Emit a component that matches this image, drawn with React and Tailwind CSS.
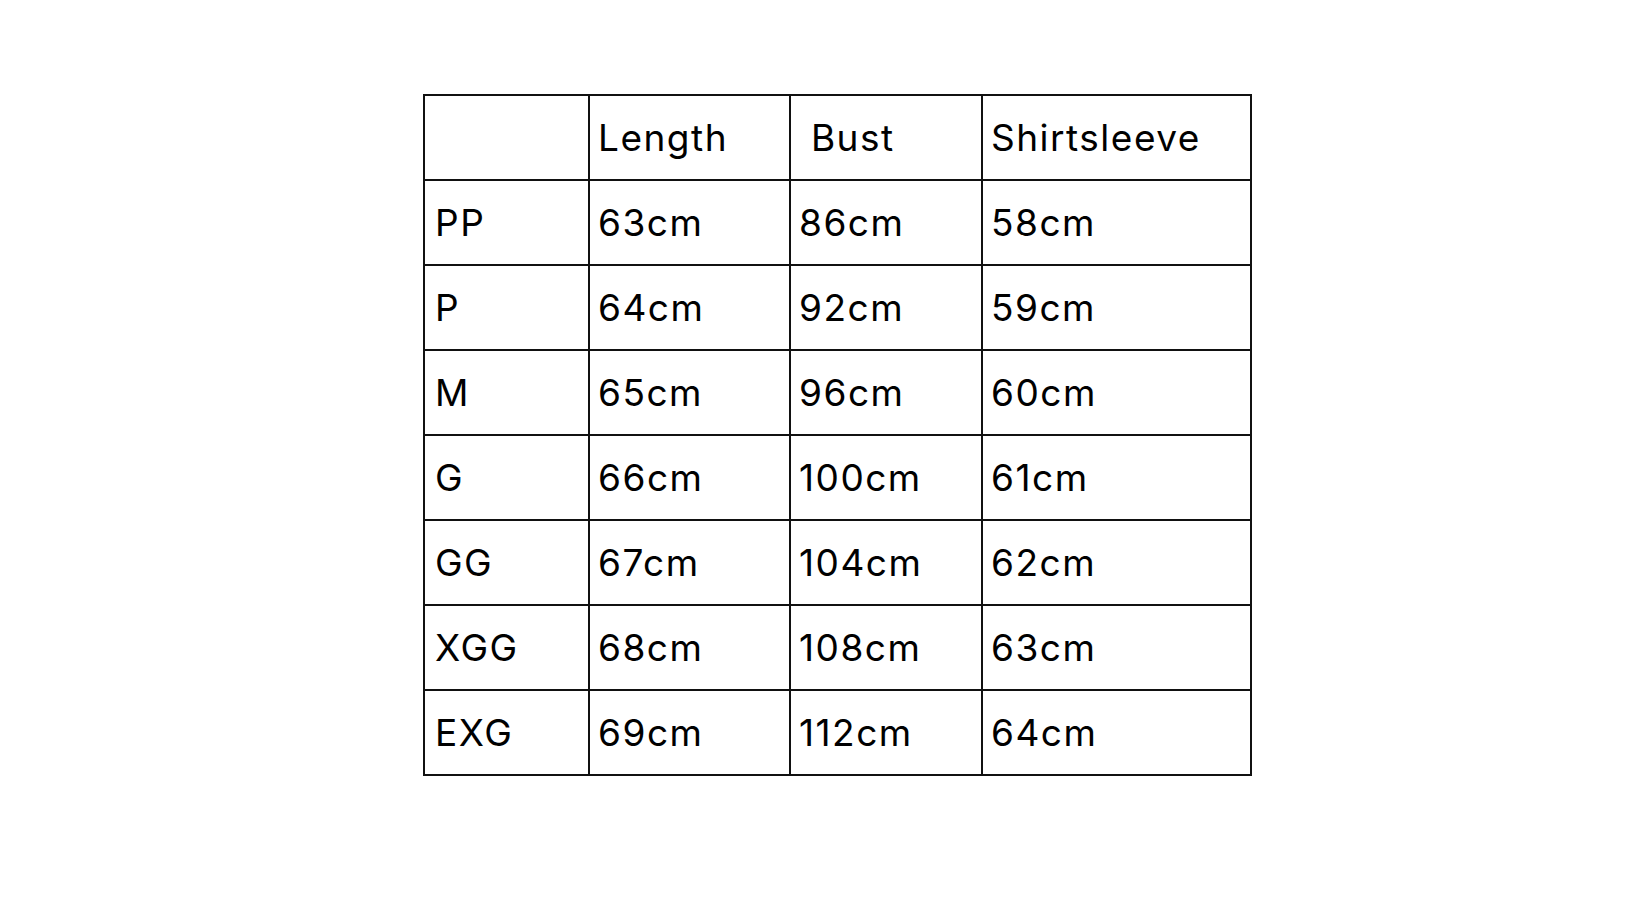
const headers = ['', 'Length', '\u00a0Bust', 'Shirtsleeve'];

const rows = [
  ['PP', '63cm', '86cm', '58cm'],
  ['P', '64cm', '92cm', '59cm'],
  ['M', '65cm', '96cm', '60cm'],
  ['G', '66cm', '100cm', '61cm'],
  ['GG', '67cm', '104cm', '62cm'],
  ['XGG', '68cm', '108cm', '63cm'],
  ['EXG', '69cm', '112cm', '64cm'],
];

const Cell = ({ children, first }) => (
  <td
    className={`h-[85px] border-2 border-[#111] align-top pt-[24px] leading-[36px] text-[37px] tracking-[1.5px] text-black ${
      first ? 'pl-[10px]' : 'pl-[8px]'
    }`}
  >
    {children}
  </td>
);

const App = () => {
  return (
    <div className="w-[1640px] h-[924px] bg-white" style={{ fontFamily: 'Inter, "Liberation Sans", sans-serif' }}>
      <div className="pt-[94px] pl-[423px]">
        <table className="border-collapse table-fixed w-[827px]">
          <colgroup>
            <col className="w-[165px]" />
            <col className="w-[201px]" />
            <col className="w-[192px]" />
            <col className="w-[269px]" />
          </colgroup>
          <tbody>
            <tr>
              {headers.map((h, i) => (
                <Cell key={i} first={i === 0}>{h}</Cell>
              ))}
            </tr>
            {rows.map((r) => (
              <tr key={r[0]}>
                {r.map((c, i) => (
                  <Cell key={i} first={i === 0}>{c}</Cell>
                ))}
              </tr>
            ))}
          </tbody>
        </table>
      </div>
    </div>
  );
};

export default App;
